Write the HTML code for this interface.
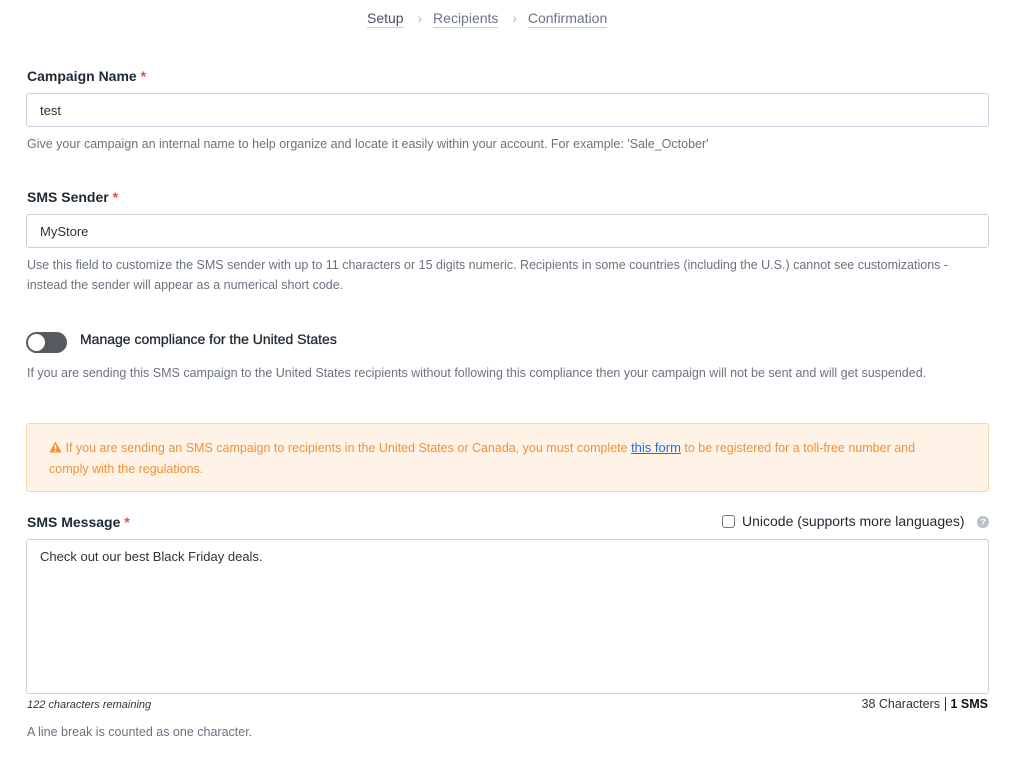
<!DOCTYPE html>
<html><head><meta charset="utf-8"><style>
*{box-sizing:border-box;margin:0;padding:0}
body{width:1024px;height:765px;background:#fff;font-family:"Liberation Sans",sans-serif;color:#1f2933;position:relative;overflow:hidden}
.a{position:absolute}
.lbl{font-size:14px;font-weight:bold;color:#1f2933}
.req{color:#e5484d}
.inp{border:1px solid #c9d3e0;border-radius:3px;background:#fff;font-size:13px;color:#333;padding-left:13px;display:flex;align-items:center}
.help{font-size:12.5px;color:#6b7280;line-height:20px}
</style></head><body>
<div class="a" style="top:10px;left:367px;font-size:14px;color:#6b7585;white-space:nowrap">
<span style="color:#4a5160;border-bottom:1px solid #c9d3e0;padding-bottom:1px">Setup</span>
<span style="color:#b0b7c3;margin:0 7px 0 10px">›</span>
<span style="border-bottom:1px solid #c9d3e0;padding-bottom:1px">Recipients</span>
<span style="color:#b0b7c3;margin:0 7px 0 10px">›</span>
<span style="border-bottom:1px solid #c9d3e0;padding-bottom:1px">Confirmation</span>
</div>

<div class="a lbl" style="top:68px;left:27px">Campaign Name <span class="req">*</span></div>
<div class="a inp" style="top:93px;left:26px;width:963px;height:34px">test</div>
<div class="a help" style="top:134px;left:27px">Give your campaign an internal name to help organize and locate it easily within your account. For example: 'Sale_October'</div>

<div class="a lbl" style="top:189px;left:27px">SMS Sender <span class="req">*</span></div>
<div class="a inp" style="top:214px;left:26px;width:963px;height:34px">MyStore</div>
<div class="a help" style="top:255px;left:27px;width:960px">Use this field to customize the SMS sender with up to 11 characters or 15 digits numeric. Recipients in some countries (including the U.S.) cannot see customizations - instead the sender will appear as a numerical short code.</div>

<div class="a" style="top:332px;left:26px;width:41px;height:21px;border-radius:11px;background:#555a60"><div style="position:absolute;left:2px;top:2px;width:17px;height:17px;border-radius:50%;background:#fff"></div></div>
<div class="a lbl" style="top:331px;left:80px;font-weight:normal;color:#1f2933;font-size:14px;-webkit-text-stroke:.3px #1f2933">Manage compliance for the United States</div>
<div class="a help" style="top:363px;left:27px">If you are sending this SMS campaign to the United States recipients without following this compliance then your campaign will not be sent and will get suspended.</div>

<div class="a" style="top:423px;left:26px;width:963px;height:69px;background:#fff3e8;border:1px solid #fcd3ad;border-radius:3px"></div>
<div class="a" style="top:437px;left:49px;width:885px;font-size:12.5px;line-height:21px;color:#f0913a">
<svg width="13" height="12" viewBox="0 0 13 12" style="vertical-align:-1px"><path d="M6.5 0.5L12.7 11.5H0.3Z" fill="#f0913a"/><rect x="5.8" y="4" width="1.4" height="4" fill="#fff"/><rect x="5.8" y="9" width="1.4" height="1.4" fill="#fff"/></svg>
If you are sending an SMS campaign to recipients in the United States or Canada, you must complete <span style="color:#1a73d9;text-decoration:underline;font-size:13px">this form</span> to be registered for a toll-free number and comply with the regulations.</div>

<div class="a lbl" style="top:514px;left:27px">SMS Message <span class="req">*</span></div>
<div class="a" style="top:515px;left:722px;width:13px;height:13px;border:1px solid #777;border-radius:3px"></div>
<div class="a" style="top:513px;left:742px;font-size:14px;color:#1f2933">Unicode (supports more languages)</div>
<div class="a" style="top:516px;left:977px;width:12px;height:12px;border-radius:50%;background:#b7bfca;color:#fff;font-size:9px;font-weight:bold;text-align:center;line-height:12px">?</div>
<div class="a inp" style="top:539px;left:26px;width:963px;height:155px;align-items:flex-start;padding-top:9px">Check out our best Black Friday deals.</div>
<div class="a" style="top:699px;left:27px;font-size:11px;font-style:italic;color:#333">122 characters remaining</div>
<div class="a" style="top:697px;right:36px;font-size:12.5px;color:#333">38 Characters <span style="border-left:1px solid #333;margin-left:2px;padding-left:4px;font-weight:bold;color:#111">1 SMS</span></div>
<div class="a help" style="top:722px;left:27px">A line break is counted as one character.</div>
</body></html>
